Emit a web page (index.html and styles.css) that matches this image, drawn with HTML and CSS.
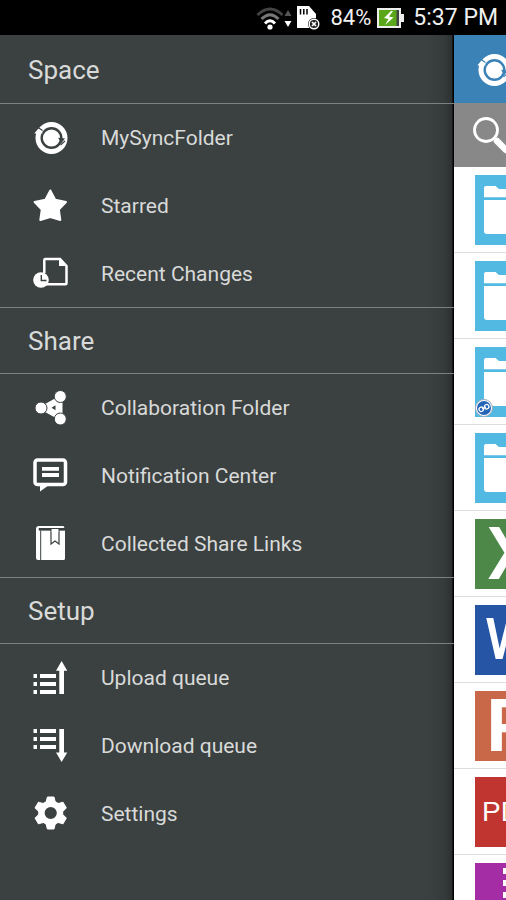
FILE: index.html
```html
<!DOCTYPE html>
<html lang="en">
<head>
    <meta charset="UTF-8">
    <meta name="viewport" content="width=device-width, initial-scale=1.0">
    <title>MySyncFolder</title>
    <link rel="stylesheet" href="styles.css">
</head>
<body>
    <!-- shared icons -->
    <svg class="sprite" aria-hidden="true">
        <symbol id="sync" viewBox="0 0 35 35">
            <circle cx="18.5" cy="18" r="13.5" fill="none" stroke="#fff" stroke-width="5"/>
            <path class="cut" d="M5 7.500L9.500 10.500M27.500 25L32 21" fill="none" stroke-width="1.2"/>
            <path d="M1.3 13.5L5.2 8.8L10 13.2L7 13.6L6 17L2.8 18L3.6 13.4z" fill="#fff"/>
            <circle cx="18.5" cy="18" r="8.6" fill="#fff"/>
            <path class="cut-fill" d="M25 17.8L32 18.6L28.4 23z"/>
        </symbol>
        <symbol id="folder" viewBox="0 0 70 70">
            <path d="M9 22.3V13q0-2 2-2h9.5l3.5 3h35q2 0 2 2v6.3z" fill="#fff"/>
            <path d="M9 25h52v31q0 3-3 3H12q-3 0-3-3z" fill="#fff"/>
        </symbol>
    </svg>

    <div class="statusbar">
        <svg width="28" height="24" viewBox="0 0 28 24" fill="none" stroke-width="3">
            <path d="M1.5 9Q14-3 26.5 9" stroke="#444"/>
            <path d="M5.5 13Q14 4.5 22.5 13" stroke="#777"/>
            <path d="M9 17.500Q14 12 19 17.500" stroke="#fff"/>
            <circle cx="14" cy="21" r="2.600" fill="#fff"/>
        </svg>
        <svg width="8" height="24" viewBox="0 0 8 24">
            <path d="M4 4L7.500 10H.5z" fill="#555"/>
            <path d="M4 21L.5 15H7.500z" fill="#fff"/>
        </svg>
        <svg class="sd" width="24" height="24" viewBox="0 0 24 24">
            <path d="M1 0H13L20 8V22H1z" fill="#fff"/>
            <path d="M4.500 3V8.500M7.800 3V8.500M11 3V8.500" stroke="#000" stroke-width="1.500"/>
            <circle cx="18" cy="18" r="6" fill="#000"/>
            <circle cx="18" cy="18" r="4.800" fill="#222" stroke="#fff" stroke-width="1.400"/>
            <path d="M16 16L20 20M20 16L16 20" stroke="#fff" stroke-width="1.700"/>
        </svg>
        <span class="percent">84%</span>
        <svg class="battery" width="27" height="20" viewBox="0 0 27 20">
            <path d="M0 0H24V6H27V14H24V20H0z" fill="#eee"/>
            <path d="M2 2H22V18H2z" fill="#5aa81a"/>
            <path d="M19.500 2H22V18H19.500z" fill="#444"/>
            <path d="M14 3L7 10L11.500 11L8 17L16.500 9.500L12 8.500L16 3z" fill="#fff"/>
        </svg>
        <span class="time">5:37 PM</span>
    </div>

    <div class="screen">
        <nav class="drawer">
            <h2>Space</h2>
            <ul>
                <li><a href="#">
                    <svg class="icon"><use href="#sync"/></svg>
                    MySyncFolder
                </a></li>
                <li><a href="#">
                    <svg class="icon" viewBox="0 0 35 35">
                        <path d="M17.300 2.500L22.200 11.700L33 14L25.800 21.500L27.300 32L17.300 29L7.300 32L8.800 21.500L1.600 14L12.400 11.700z" fill="#fff" stroke="#fff" stroke-width="2" stroke-linejoin="round"/>
                    </svg>
                    Starred
                </a></li>
                <li><a href="#">
                    <svg class="icon" viewBox="0 0 35 35">
                        <path d="M11.300 17V4Q11.300 3 12.300 3H27L33.500 10V27.300Q33.500 28.300 32.500 28.300H13" fill="none" stroke="#fff" stroke-width="2.500"/>
                        <path d="M26 3V10H33.500z" fill="#fff"/>
                        <circle cx="8" cy="24" r="7.800" fill="#fff"/>
                        <path d="M8.300 19V24.500H13.500" fill="none" stroke="#3b4040" stroke-width="1.400"/>
                    </svg>
                    Recent Changes
                </a></li>
            </ul>
            <h2>Share</h2>
            <ul>
                <li><a href="#">
                    <svg class="icon" viewBox="0 0 35 35">
                        <path d="M12 14L22 8.500L29.500 11.500V24L22 27.500L12 22z" fill="#fff"/>
                        <path d="M18.500 17.800L22.500 15.300V20.300z" fill="#3b4040"/>
                        <g fill="#fff" stroke="#3b4040" stroke-width="1">
                            <circle cx="8" cy="18" r="6"/>
                            <circle cx="27.300" cy="6.500" r="6"/>
                            <circle cx="27.300" cy="29" r="6"/>
                        </g>
                    </svg>
                    Collaboration Folder
                </a></li>
                <li><a href="#">
                    <svg class="icon" viewBox="0 0 35 35">
                        <rect x="2" y="2" width="30.500" height="24.500" rx="2.500" fill="none" stroke="#fff" stroke-width="3.500"/>
                        <path d="M7 27V33.500L16 27z" fill="#fff"/>
                        <path d="M9 10.800H26M9 17H26" stroke="#fff" stroke-width="3.800"/>
                    </svg>
                    Notification Center
                </a></li>
                <li><a href="#">
                    <svg class="icon" viewBox="0 0 35 35">
                        <path d="M6 0H30.500L31.500 2H6Q5 2.500 6 4.500H32V32.500Q32 34 30.500 34H5Q3 34 3 32V3Q3 0 6 0z" fill="#fff"/>
                        <path d="M7.700 4.500V34" stroke="#3b4040" stroke-width="1"/>
                        <path d="M18 3V18L22 15L26 18V3" fill="#fff" stroke="#3b4040" stroke-width="1.200"/>
                        <path d="M6 3.300H32" stroke="#3b4040" stroke-width="2"/>
                        <path d="M18.600 3H25.400V6H18.600z" fill="#fff"/>
                    </svg>
                    Collected Share Links
                </a></li>
            </ul>
            <h2>Setup</h2>
            <ul>
                <li><a href="#">
                    <svg class="icon" viewBox="0 0 35 35" fill="#fff">
                        <path d="M.5 14H4V18H.5zM.5 22H4V26H.5zM.5 30H4V34H.5zM7 14H23V18H7zM7 22H23V26H7zM7 30H23V34H7z"/>
                        <path d="M28.600 1L34.300 10.700H31V34H26.300V10.700H23z"/>
                    </svg>
                    Upload queue
                </a></li>
                <li><a href="#">
                    <svg class="icon" viewBox="0 0 35 35" fill="#fff">
                        <path d="M.5 1H4V5H.5zM.5 9H4V13H.5zM.5 17H4V21H.5zM7 1H23V5H7zM7 9H23V13H7zM7 17H23V21H7z"/>
                        <path d="M28.600 34L34.300 24.500H31V1H26.300V24.500H23z"/>
                    </svg>
                    Download queue
                </a></li>
                <li><a href="#">
                    <svg class="icon" viewBox="0 0 35 35">
                        <circle cx="17.700" cy="17" r="9.300" fill="none" stroke="#fff" stroke-width="6.400"/>
                        <g fill="#fff" stroke="#fff" stroke-linejoin="round">
                            <path id="tooth" d="M13 6.500L14.400 1H21L22.400 6.500z"/>
                            <use href="#tooth" transform="rotate(60 17.700 17)"/>
                            <use href="#tooth" transform="rotate(120 17.700 17)"/>
                            <use href="#tooth" transform="rotate(180 17.700 17)"/>
                            <use href="#tooth" transform="rotate(240 17.700 17)"/>
                            <use href="#tooth" transform="rotate(300 17.700 17)"/>
                        </g>
                    </svg>
                    Settings
                </a></li>
            </ul>
        </nav>

        <main class="files">
            <header class="appbar">
                <svg class="icon"><use href="#sync"/></svg>
            </header>
            <div class="search">
                <button aria-label="Search">
                    <svg width="40" height="40" viewBox="0 0 40 40" fill="none" stroke="#fff">
                        <circle cx="14" cy="15" r="11.500" stroke-width="2.800"/>
                        <path d="M21.500 22.500L25 26" stroke-width="2.500"/>
                        <path d="M25 26L34 35" stroke-width="6.500" stroke-linecap="round"/>
                    </svg>
                </button>
            </div>
            <ul class="list">
                <li><div class="tile folder"><svg><use href="#folder"/></svg></div></li>
                <li><div class="tile folder"><svg><use href="#folder"/></svg></div></li>
                <li>
                    <div class="tile folder">
                        <svg><use href="#folder"/></svg>
                        <svg class="badge" viewBox="0 0 18 18" fill="none" stroke="#fff">
                            <circle cx="9" cy="9" r="8.500" fill="#fff" stroke="#9ab"/>
                            <circle cx="9" cy="9" r="7" fill="#2465b8" stroke="none"/>
                            <g transform="rotate(-25 9 9)" stroke-width="1.300">
                                <circle cx="6" cy="9" r="2.200"/>
                                <circle cx="12" cy="9" r="2.200"/>
                                <path d="M7 9H11"/>
                            </g>
                        </svg>
                    </div>
                </li>
                <li><div class="tile folder"><svg><use href="#folder"/></svg></div></li>
                <li><div class="tile excel">X</div></li>
                <li><div class="tile word">W</div></li>
                <li><div class="tile ppt">P</div></li>
                <li><div class="tile pdf">PDF</div></li>
                <li>
                    <div class="tile video">
                        <svg viewBox="0 0 70 70" fill="#fff">
                            <path d="M28 5H34V11H28zM28 17H34V23H28zM28 29H34V35H28zM28 41H34V47H28z"/>
                        </svg>
                    </div>
                </li>
            </ul>
        </main>
    </div>
</body>
</html>
```

FILE: styles.css
```css
*{
    margin: 0;
    padding: 0;
    box-sizing: border-box;
}
body{
    height: 100vh;
    display: flex;
    flex-direction: column;
    overflow: hidden;
    background-color: black;
    font-family: Roboto, "Liberation Sans", sans-serif;
}
ul{
    list-style: none;
}
.sprite{
    display: none;
}
.statusbar{
    height: 35px;
    flex-shrink: 0;
    display: flex;
    justify-content: flex-end;
    align-items: center;
    padding-right: 8px;
    color: #f0f0f0;
    font-size: 22px;
}
.sd{
    margin-left: 4px;
}
.percent{
    margin-left: 11px;
}
.battery{
    margin-left: 6px;
}
.time{
    margin-left: 9px;
    font-size: 23px;
}
.screen{
    flex: 1;
    min-height: 0;
    display: flex;
}

/* drawer */
.drawer{
    flex: 1;
    background: linear-gradient(to left, #000 1px, #2c3030 2px, #353a3a 10px, #3b4040 28px);
    color: #d8dad9;
}
.drawer h2{
    height: 67px;
    padding-left: 28px;
    border-top: 1px solid #7c8080;
    border-bottom: 1px solid #7c8080;
    font-size: 26px;
    font-weight: 400;
    line-height: 66px;
}
.drawer h2:first-child{
    height: 69px;
    padding-top: 2px;
    border-top: none;
}
.drawer ul{
    display: grid;
    gap: 1px;
}
.drawer a{
    height: 67px;
    display: flex;
    align-items: center;
    gap: 33px;
    padding-left: 33px;
    color: inherit;
    font-size: 21px;
    text-decoration: none;
}
.icon{
    width: 35px;
    height: 35px;
    flex-shrink: 0;
    --cut: #3b4040;
}
.cut{
    stroke: var(--cut);
}
.cut-fill{
    fill: var(--cut);
}

/* file list pushed to the side */
.files{
    width: 52px;
    overflow: hidden;
    background-color: white;
}
.appbar{
    height: 68px;
    display: flex;
    align-items: center;
    padding-left: 22px;
    background-color: #3b82b7;
}
.appbar .icon{
    --cut: #3b82b7;
}
.search{
    height: 64px;
    display: flex;
    align-items: center;
    padding-left: 18px;
    background-color: #888;
}
.search button{
    height: 40px;
    border: none;
    background: none;
    cursor: pointer;
}
.list li{
    padding: 8px 0 7px 21px;
    border-bottom: 1px solid #ddd;
}
.tile{
    position: relative;
    width: 70px;
    height: 70px;
    color: white;
    font-weight: 500;
    line-height: 70px;
    text-align: center;
}
.tile svg{
    display: block;
    width: 70px;
    height: 70px;
}
.tile .badge{
    position: absolute;
    left: 0;
    bottom: 0;
    width: 18px;
    height: 18px;
}
.folder{
    background-color: #52b9e3;
}
.excel{
    background-color: #4d8848;
    font-size: 73px;
}
.word{
    background-color: #2655a5;
    font-size: 57px;
}
.ppt{
    background-color: #c96848;
    font-size: 73px;
    font-weight: 700;
}
.pdf{
    background-color: #c0352f;
    font-family: "Liberation Sans", Arial, sans-serif;
    font-size: 28px;
    font-weight: 400;
}
.video{
    background-color: #a42ca4;
}
```
